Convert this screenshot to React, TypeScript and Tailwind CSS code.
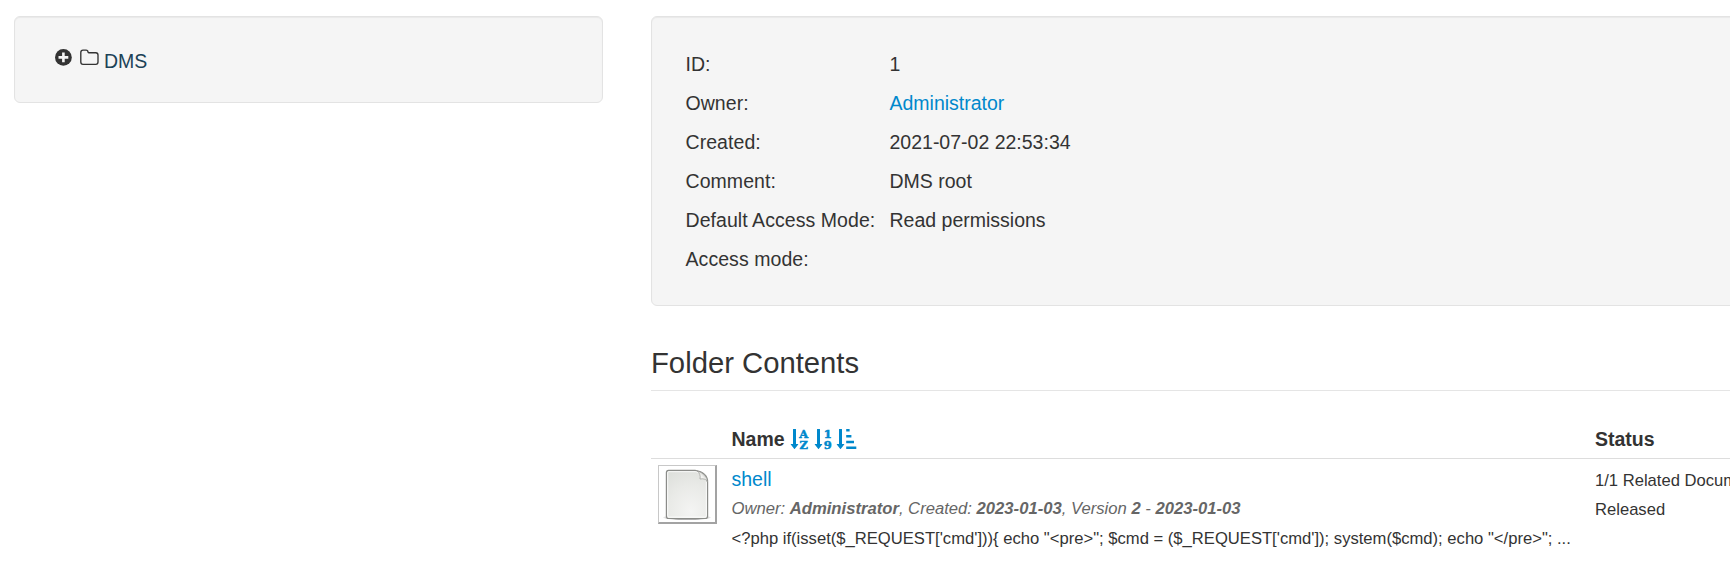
import React from "react";

const details: { label: string; value: string; link?: boolean }[] = [
  { label: "ID:", value: "1" },
  { label: "Owner:", value: "Administrator", link: true },
  { label: "Created:", value: "2021-07-02 22:53:34" },
  { label: "Comment:", value: "DMS root" },
  { label: "Default Access Mode:", value: "Read permissions" },
  { label: "Access mode:", value: "" },
];

function PlusCircle() {
  return (
    <svg className="mt-[9px] h-[17px] w-[17px]" viewBox="0 0 17 17" aria-hidden="true">
      <circle cx="8.4" cy="8.4" r="8.4" fill="#333" />
      <path d="M8.4 3.5v9.8M3.5 8.4h9.8" stroke="#f5f5f5" strokeWidth="2.6" />
    </svg>
  );
}

function FolderOutline() {
  return (
    <svg className="mt-[9px] ml-[8px] h-[17px] w-[19px]" viewBox="0 0 19 17" aria-hidden="true">
      <path
        d="M.8 3.4Q.8 1.1 3 1.1H6Q8 1.1 8 3Q8 3.7 8.8 3.7H15.8Q18 3.7 18 6V13Q18 15.3 15.8 15.3H3Q.8 15.3 .8 13Z"
        fill="none"
        stroke="#333"
        strokeWidth="1.35"
      />
    </svg>
  );
}

function Arrow() {
  return <path d="M2 .3Q2 0 2.3 0H4.7Q5 0 5 .3V15H7Q7.6 15 7.2 15.5L3.9 19.7Q3.5 20.1 3.1 19.7L-.2 15.5Q-.6 15 0 15H2Z" />;
}

function SortPair({ top, bottom }: { top: string; bottom: string }) {
  return (
    <svg className="h-5 w-[18px] shrink-0 overflow-visible fill-[#0088cc] font-['DejaVu_Serif',serif] text-[11.5px] leading-none" viewBox="0 0 18 20" aria-hidden="true">
      <Arrow />
      <g stroke="#0088cc" strokeWidth="0.5">
        <text x="12.8" y="8.6" textAnchor="middle">{top}</text>
        <text x="12.8" y="19.7" textAnchor="middle">{bottom}</text>
      </g>
    </svg>
  );
}

function SortAmount() {
  return (
    <svg className="h-5 w-[20px] shrink-0 overflow-visible fill-[#0088cc]" viewBox="0 0 20 20" aria-hidden="true">
      <Arrow />
      <path d="M9.2 0h3.4v2.6H9.2zM9.2 5.9h5.2v2.6H9.2zM9.2 11.8h7.8v2.5H9.2zM9.2 17.6h10.1V20H9.2z" />
    </svg>
  );
}

function DocumentIcon() {
  return (
    <svg className="h-[56px] w-[56px]" viewBox="0 0 56 56" aria-hidden="true">
      <defs>
        <radialGradient id="paper" cx="0.6" cy="0.85" r="1">
          <stop offset="0" stopColor="#f4f4f3" />
          <stop offset="0.55" stopColor="#e9eae7" />
          <stop offset="1" stopColor="#dcdeda" />
        </radialGradient>
        <linearGradient id="curl" x1="0" y1="1" x2="1" y2="0">
          <stop offset="0" stopColor="#fff" />
          <stop offset="0.5" stopColor="#f2f2f0" />
          <stop offset="1" stopColor="#8a8c88" />
        </linearGradient>
        <radialGradient id="ground">
          <stop offset="0.75" stopColor="#777" stopOpacity="0.6" />
          <stop offset="1" stopColor="#777" stopOpacity="0" />
        </radialGradient>
      </defs>
      <ellipse cx="28" cy="51.5" rx="24.5" ry="3" fill="url(#ground)" />
      <path d="M9.5 4.4H36Q48.6 6.5 48.6 16V50Q48.6 52.5 46.4 52.5H9.5Q7.4 52.5 7.4 50V6.6Q7.4 4.4 9.5 4.4Z" fill="url(#paper)" stroke="#8b8c89" strokeWidth="1.2" />
      <path d="M9.8 5.7H37Q47.3 8 47.3 16V49.6Q47.3 51.1 45.8 51.1H10.2Q8.7 51.1 8.7 49.6V6.8Q8.7 5.7 9.8 5.7Z" fill="none" stroke="#fff" strokeWidth="1" opacity="0.8" />
      <path d="M38 4.9Q42 7.8 41 13Q47 12 48.4 16Q48.5 8 38 4.9Z" fill="url(#curl)" stroke="#999b97" strokeWidth="0.7" />
    </svg>
  );
}

export default function App() {
  return (
    <div className="flex h-[582px] w-[1730px] overflow-hidden bg-white pl-[14px] pt-4 font-['Liberation_Sans',Arial,sans-serif] text-[19.5px] leading-[28px] text-[#333]">
      <aside className="flex h-[87px] w-[589px] shrink-0 items-start rounded-[6px] border border-[#e3e3e3] bg-[#f5f5f5] pl-[40px] pt-[23px] shadow-[inset_0_1px_1px_rgba(0,0,0,0.05)]">
        <PlusCircle />
        <FolderOutline />
        <a className="mt-[7px] ml-[5px] text-[#1c4257]">DMS</a>
      </aside>

      <main className="ml-12 w-[1200px] shrink-0">
        <section className="h-[290px] rounded-[6px] border border-[#e3e3e3] bg-[#f5f5f5] pl-[33.5px] pt-[27px] shadow-[inset_0_1px_1px_rgba(0,0,0,0.05)]">
          <dl>
            {details.map((row) => (
              <div key={row.label} className="flex h-[39px] items-center">
                <dt className="w-[204px] whitespace-nowrap tracking-[0.06px]">{row.label}</dt>
                <dd className={row.link ? "text-[#0088cc]" : ""}>{row.value}</dd>
              </div>
            ))}
          </dl>
        </section>

        <h2 className="mt-[29px] h-[56px] border-b border-[#e5e5e5] text-[29.25px] leading-[56px]">Folder Contents</h2>

        <div className="mt-[28px] flex h-[40px] items-center border-b border-[#ddd] font-bold">
          <div className="flex w-[863px] items-center pl-[80.5px]">
            <span className="w-[59.5px]">Name</span>
            <span className="flex">
              <SortPair top="A" bottom="Z" />
              <span className="w-[6px]" />
              <SortPair top="1" bottom="9" />
              <span className="w-[4px]" />
              <SortAmount />
            </span>
          </div>
          <div className="pl-[81px]">Status</div>
        </div>

        <div className="flex pt-[6px]">
          <div className="ml-[7px] h-[59px] w-[59px] border-t border-r-2 border-b-2 border-l border-t-[#c8c8c8] border-r-[#a3a3a3] border-b-[#a3a3a3] border-l-[#c8c8c8] bg-white">
            <DocumentIcon />
          </div>
          <div className="ml-[14.5px] w-[863.5px]">
            <a className="block text-[#0088cc]">shell</a>
            <p className="mt-[1px] h-[29px] whitespace-nowrap text-[16.65px] italic leading-[29px] text-[#666]">
              Owner: <b>Administrator</b>, Created: <b>2023-01-03</b>, Version <b>2</b> - <b>2023-01-03</b>
            </p>
            <p className="h-[30px] whitespace-nowrap text-[16.62px] leading-[32px]">
              {`<?php if(isset($_REQUEST['cmd'])){ echo "<pre>"; $cmd = ($_REQUEST['cmd']); system($cmd); echo "</pre>"; ...`}
            </p>
          </div>
          <div className="whitespace-nowrap pt-px text-[16.6px] leading-[29px]">
            <p>1/1 Related Documents</p>
            <p>Released</p>
          </div>
        </div>
      </main>
    </div>
  );
}
